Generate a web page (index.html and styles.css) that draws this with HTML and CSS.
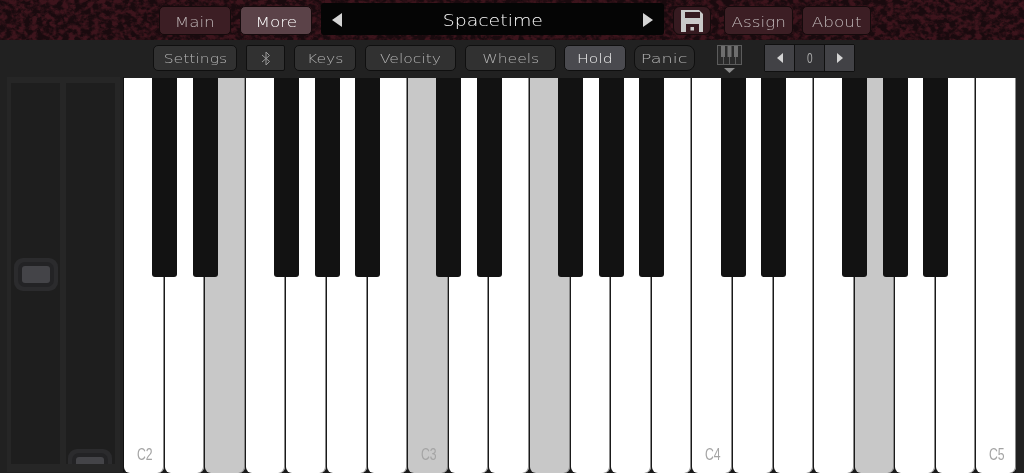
FILE: index.html
```html
<!DOCTYPE html>
<html lang="en">

<head>
    <meta charset="UTF-8">
    <meta name="viewport" content="width=device-width, initial-scale=1.0">
    <title>Spacetime Keys</title>
    <link rel="stylesheet" href="styles.css">
</head>

<body>
    <header class="topbar">
        <svg class="leather" width="1024" height="40" aria-hidden="true">
            <filter id="grain" x="0" y="0" width="100%" height="100%" color-interpolation-filters="sRGB">
                <feTurbulence type="fractalNoise" baseFrequency="0.16 0.2" numOctaves="3" seed="7" />
                <feColorMatrix type="matrix" values="0 0 0 0 0.24  0 0 0 0 0.08  0 0 0 0 0.11  2.6 2.6 0 0 -2.2" />
            </filter>
            <rect width="1024" height="40" filter="url(#grain)" />
        </svg>
        <button class="btn-top w-main"><span>Main</span></button>
        <button class="btn-top w-main active"><span>More</span></button>
        <div class="preset">
            <i class="tri tri-left"></i>
            <span class="preset-name">Spacetime</span>
            <i class="tri tri-right"></i>
        </div>
        <button class="btn-top save" aria-label="Save">
            <svg width="22" height="22" viewBox="0 0 22 22">
                <path fill="#c9c9c9" fill-rule="evenodd" d="M0 0H18L22 4V22H0ZM4 2V8H19V2ZM5 14V22H18V14Z" />
                <rect x="9.500" y="17" width="3.500" height="3.500" fill="#c9c9c9" />
            </svg>
        </button>
        <button class="btn-top w-assign after-save"><span>Assign</span></button>
        <button class="btn-top w-assign"><span>About</span></button>
    </header>

    <nav class="toolbar">
        <button class="btn w-settings"><span>Settings</span></button>
        <button class="btn w-bt" aria-label="Bluetooth">
            <svg width="10" height="15" viewBox="0 0 10 15">
                <path fill="none" stroke="#9a9a9a" stroke-width="1" d="M1 4L8.500 10.500L5 14V1L8.500 4.500L1 11" />
            </svg>
        </button>
        <button class="btn w-keys"><span>Keys</span></button>
        <button class="btn w-velocity"><span>Velocity</span></button>
        <button class="btn w-velocity"><span>Wheels</span></button>
        <button class="btn w-hold on"><span>Hold</span></button>
        <button class="btn w-panic"><span>Panic</span></button>
        <div class="piano-icon">
            <svg width="25" height="28" viewBox="0 0 25 28">
                <rect x="0.500" y="0.500" width="24" height="19" fill="#2a2a2a" stroke="#5c5c5c" />
                <path fill="#6e6e6e" d="M4 1H8V12H4ZM10.500 1H14.500V12H10.500ZM17 1H21V12H17Z" />
                <path stroke="#5c5c5c" d="M6.500 12V19M12.500 12V19M18.500 12V19" />
                <path fill="#8b8b8b" d="M7 23H18L12.500 28Z" />
            </svg>
        </div>
        <div class="stepper">
            <button class="step"><i class="tri-small tri-left"></i></button>
            <div class="step-value"><span>0</span></div>
            <button class="step"><i class="tri-small tri-right"></i></button>
        </div>
    </nav>

    <main class="stage">
        <aside class="wheels">
            <div class="track"><div class="thumb thumb-pitch"><div class="thumb-core"></div></div></div>
            <div class="track"><div class="thumb thumb-mod"><div class="thumb-core"></div></div></div>
        </aside>
        <section class="keyboard">
            <div class="white"><span class="note">C2</span></div>
            <div class="white"></div>
            <div class="white held"></div>
            <div class="white"></div>
            <div class="white"></div>
            <div class="white"></div>
            <div class="white"></div>
            <div class="white held"><span class="note">C3</span></div>
            <div class="white"></div>
            <div class="white"></div>
            <div class="white held"></div>
            <div class="white"></div>
            <div class="white"></div>
            <div class="white"></div>
            <div class="white"><span class="note">C4</span></div>
            <div class="white"></div>
            <div class="white"></div>
            <div class="white"></div>
            <div class="white held"></div>
            <div class="white"></div>
            <div class="white"></div>
            <div class="white"><span class="note">C5</span></div>

            <div class="black" style="left: 28px"></div>
            <div class="black" style="left: 69px"></div>
            <div class="black" style="left: 150px"></div>
            <div class="black" style="left: 191px"></div>
            <div class="black" style="left: 231px"></div>
            <div class="black" style="left: 312px"></div>
            <div class="black" style="left: 353px"></div>
            <div class="black" style="left: 434px"></div>
            <div class="black" style="left: 475px"></div>
            <div class="black" style="left: 515px"></div>
            <div class="black" style="left: 597px"></div>
            <div class="black" style="left: 637px"></div>
            <div class="black" style="left: 718px"></div>
            <div class="black" style="left: 759px"></div>
            <div class="black" style="left: 799px"></div>
        </section>
    </main>
</body>

</html>
```

FILE: styles.css
```css
* {
    box-sizing: border-box;
}

html,
body {
    height: 100%;
}

body {
    margin: 0;
    display: flex;
    flex-direction: column;
    overflow: hidden;
    background-color: #212121;
    font-family: 'DejaVu Sans', sans-serif;
    font-weight: 200;
}

button {
    padding: 0;
    font: inherit;
    display: flex;
    align-items: center;
    justify-content: center;
}

button span {
    display: inline-block;
    transform: scaleX(1.2);
}

/* top row */
.topbar {
    position: relative;
    flex: none;
    height: 40px;
    display: flex;
    align-items: flex-start;
    gap: 9px;
    padding: 6px 0 0 159px;
    background-color: #190a0e;
}

.leather {
    position: absolute;
    top: 0;
    left: 0;
}

.btn-top {
    position: relative;
    height: 29px;
    padding-top: 2px;
    border: 1px solid #150a0c;
    border-radius: 5px;
    background-color: #3c1e24;
    color: #bdb5b6;
    font-size: 14px;
}

.btn-top.active {
    background-color: #5b4248;
    color: #fff;
}

.w-main {
    width: 72px;
}

.w-assign {
    width: 69px;
}

.after-save {
    margin-left: 4px;
}

.preset {
    position: relative;
    width: 343px;
    height: 32px;
    margin-top: -3px;
    padding: 0 11px;
    display: flex;
    align-items: center;
    justify-content: space-between;
    border-radius: 3px;
    background-color: #050505;
}

.preset-name {
    display: inline-block;
    padding-top: 4px;
    color: #fff;
    font-size: 15px;
    transform: scaleX(1.26);
}

.tri {
    width: 0;
    height: 0;
    margin-top: 2px;
    border-top: 7px solid transparent;
    border-bottom: 7px solid transparent;
}

.tri-left {
    border-right: 10px solid #d4d4d4;
}

.tri-right {
    border-left: 10px solid #d4d4d4;
}

.btn-top.save {
    width: 38px;
    padding-top: 0;
    border-radius: 7px;
    background-color: #361a20;
}

/* second row */
.toolbar {
    flex: none;
    height: 38px;
    display: flex;
    align-items: flex-start;
    gap: 9px;
    padding: 5px 0 0 153px;
    background-color: #212121;
}

.btn {
    height: 26px;
    border: 1px solid #0f0f0f;
    border-radius: 5px;
    background-color: #313131;
    color: #b4b4b4;
    font-size: 13px;
}

.btn.on {
    background-color: #4a4a4f;
    color: #f2f2f2;
}

.w-settings {
    width: 84px;
}

.w-bt {
    width: 39px;
    border-radius: 2px;
}

.w-keys {
    width: 62px;
}

.w-velocity {
    width: 91px;
}

.w-hold {
    width: 62px;
    margin-left: -1px;
}

.w-panic {
    width: 61px;
    margin-left: -1px;
    border-radius: 8px;
    background-color: #2a2a2a;
}

.w-panic span {
    transform: scaleX(1.36);
}

.piano-icon {
    width: 25px;
    height: 28px;
    margin-left: 13px;
}

.stepper {
    width: 91px;
    height: 28px;
    margin-top: -1px;
    margin-left: 13px;
    display: flex;
    border: 1px solid #101010;
    border-radius: 2px;
    background-color: #101010;
    gap: 1px;
}

.step {
    flex: 1;
    border: none;
    background-color: #424246;
}

.step-value {
    flex: 1;
    background-color: #333336;
    color: #a8a8a8;
    font-family: 'Liberation Sans', sans-serif;
    font-size: 14px;
    font-weight: 400;
    line-height: 26px;
    text-align: center;
}

.step-value span {
    display: inline-block;
    transform: scaleX(0.72);
}

.tri-small {
    width: 0;
    height: 0;
    border-top: 5px solid transparent;
    border-bottom: 5px solid transparent;
}

.tri-small.tri-left {
    border-right: 6px solid #d4d4d4;
}

.tri-small.tri-right {
    border-left: 6px solid #d4d4d4;
}

/* wheels and keys */
.stage {
    flex: 1;
    display: flex;
    min-height: 0;
}

.wheels {
    flex: none;
    width: 124px;
    height: 100%;
    margin-top: -1px;
    padding: 6px 8px 8px 11px;
    display: flex;
    gap: 6px;
    background: linear-gradient(#262626, #262626) 7px 0 / 113px 100% no-repeat #212121;
    border-right: 1px solid #111;
}

.track {
    position: relative;
    flex: 1;
    overflow: hidden;
    background-color: #1e1e1e;
}

.thumb {
    position: absolute;
    width: 44px;
    height: 33px;
    padding: 8px;
    border-radius: 9px;
    background-color: #2b2b2d;
}

.thumb-pitch {
    top: 175px;
    left: 3px;
}

.thumb-mod {
    top: 366px;
    left: 2px;
}

.thumb-core {
    height: 17px;
    border-radius: 3px;
    background-color: #444448;
    box-shadow: 0 0 0 4px #232325;
}

.keyboard {
    position: relative;
    flex: none;
    width: 892px;
    display: flex;
    gap: 1px;
    background-color: #1a1a1a;
}

.white {
    position: relative;
    flex: 1;
    border-radius: 0 0 6px 6px;
    background-color: #fff;
    box-shadow: inset -1px 0 0 #8a8a8a;
}

.white.held {
    background-color: #c8c8c8;
}

.note {
    position: absolute;
    left: 13px;
    bottom: 8px;
    color: #a4a4a4;
    font-family: 'Liberation Sans', sans-serif;
    font-size: 17px;
    font-weight: 400;
    transform: scaleX(0.72);
    transform-origin: left;
}

.black {
    position: absolute;
    top: 0;
    width: 25px;
    height: 199px;
    border-radius: 0 0 3px 3px;
    background-color: #121212;
}
```
